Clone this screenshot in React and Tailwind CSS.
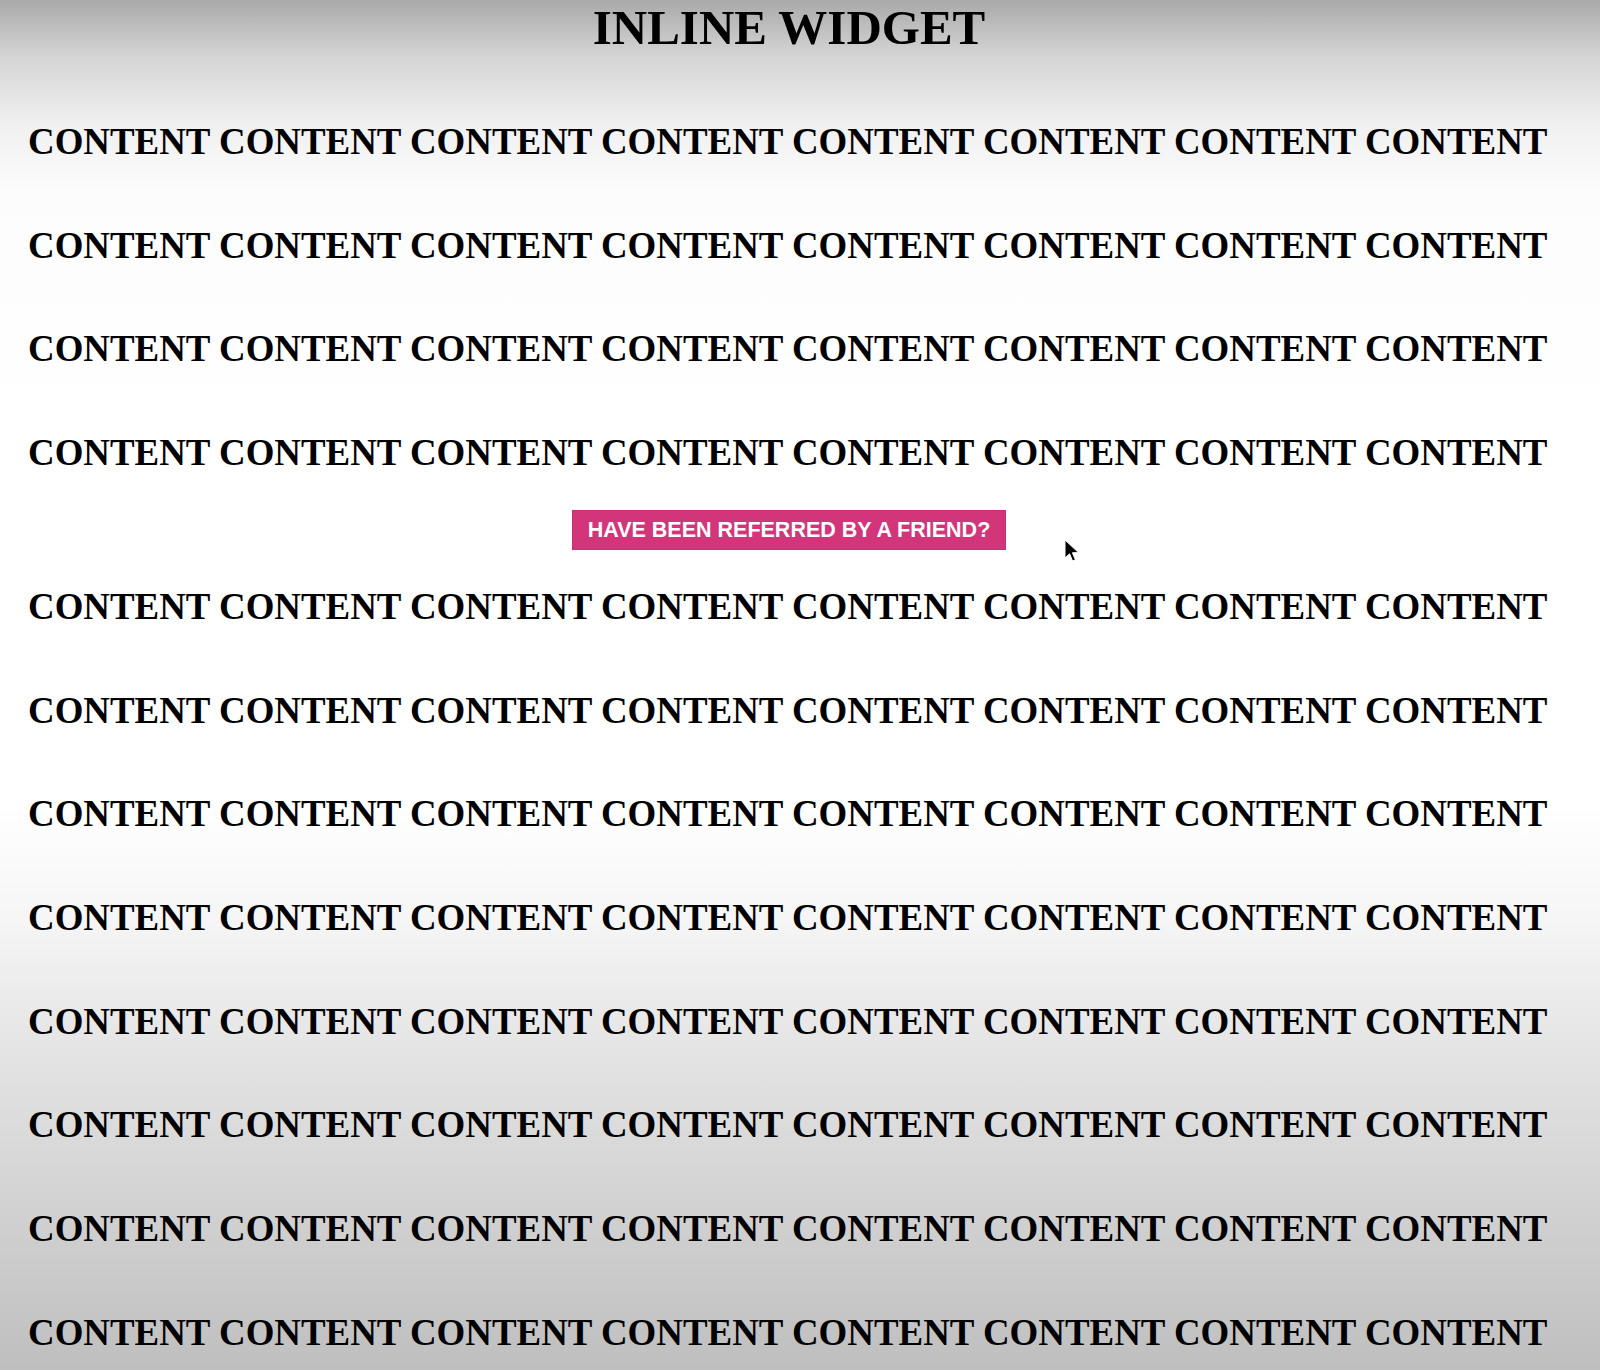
import React from "react";

const rowsTop = [1, 2, 3, 4];
const rowsBottom = [5, 6, 7, 8, 9, 10, 11, 12];

const Row = () => (
  <div className="pl-[28px] whitespace-nowrap leading-[103.7px] text-[36.9px] font-bold text-black">
    CONTENT CONTENT CONTENT CONTENT CONTENT CONTENT CONTENT CONTENT
  </div>
);

const Cursor = () => (
  <svg
    className="absolute left-[1064px] top-[539px]"
    width="16"
    height="24"
    viewBox="0 0 16 24"
  >
    <path
      d="M1 1 L1 19 L5.5 14.8 L8.6 22 L11.4 20.8 L8.4 13.8 L14.5 13.6 Z"
      fill="#000"
      stroke="#fff"
      strokeWidth="1"
      strokeLinejoin="round"
    />
  </svg>
);

export default function App() {
  return (
    <div
      className="relative min-h-[1370px] w-full overflow-hidden bg-[linear-gradient(to_bottom,#a9a9a9_0%,#d4d4d4_4%,#f0f0f0_9%,#fcfcfc_14%,#ffffff_30%,#ffffff_58%,#f6f6f6_66%,#e4e4e4_76%,#d2d2d2_87%,#bdbdbd_100%)]"
      style={{ fontFamily: '"Liberation Serif", "Times New Roman", serif' }}
    >
      <div className="w-[1578px]">
        <h1 className="h-[56px] text-center text-[49px] leading-[56px] font-bold text-black">
          INLINE WIDGET
        </h1>

        <div className="mt-[34px]">
          {rowsTop.map((r) => (
            <Row key={r} />
          ))}
        </div>

        <div className="mt-[5px] flex justify-center">
          <button
            type="button"
            className="h-[40px] border border-[#c92f72] bg-[#d3357b] px-[15px] text-[21.5px] font-bold text-white"
            style={{ fontFamily: '"Liberation Sans", Arial, sans-serif' }}
          >
            HAVE BEEN REFERRED BY A FRIEND?
          </button>
        </div>

        <div className="mt-[5px]">
          {rowsBottom.map((r) => (
            <Row key={r} />
          ))}
        </div>
      </div>

      <Cursor />
    </div>
  );
}
